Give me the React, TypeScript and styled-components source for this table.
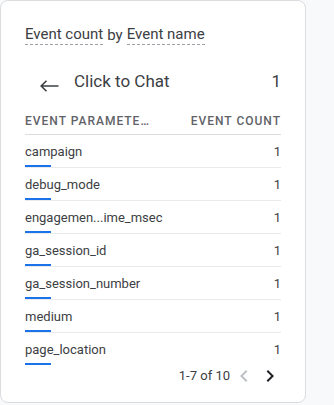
import { createGlobalStyle, styled } from 'styled-components';

const GlobalStyle = createGlobalStyle`
  html, body {
    margin: 0;
    padding: 0;
    background: #f8f9fa;
  }
  body {
    font-family: Roboto, 'Liberation Sans', Arial, sans-serif;
    color: #3c4043;
  }
`;

const rows = [
  { name: 'campaign', count: 1, share: 1 },
  { name: 'debug_mode', count: 1, share: 1 },
  { name: 'engagemen...ime_msec', count: 1, share: 1 },
  { name: 'ga_session_id', count: 1, share: 1 },
  { name: 'ga_session_number', count: 1, share: 1 },
  { name: 'medium', count: 1, share: 1 },
  { name: 'page_location', count: 1, share: 1 },
];

const Card = styled.div`
  box-sizing: border-box;
  width: 306px;
  height: 403px;
  background: #fff;
  border: 1px solid #dadce0;
  border-radius: 8px;
  padding: 24px 24px 0 24px;
  display: flex;
  flex-direction: column;
`;

const Title = styled.div`
  font-size: 15px;
  line-height: 20px;
  color: #3c4043;
  display: flex;
  gap: 4px;
`;

const Dim = styled.span`
  border-bottom: 1px dashed #9aa0a6;
  line-height: 18px;
`;

const DrillRow = styled.div`
  display: flex;
  align-items: center;
  margin-top: 24px;
  height: 24px;
  font-size: 17px;
  color: #3c4043;
`;

const BackButton = styled.button`
  border: none;
  background: none;
  padding: 0;
  margin: 0 15px 0 15px;
  display: flex;
  align-items: center;
  height: 24px;
  cursor: pointer;
  svg {
    margin-top: 9px;
  }
`;

const DrillName = styled.span`
  flex: 1;
`;

const HeaderRow = styled.div`
  display: flex;
  justify-content: space-between;
  margin-top: 20px;
  padding-bottom: 5px;
  border-bottom: 1px solid #dadce0;
  font-size: 12px;
  line-height: 16px;
  font-weight: 500;
  letter-spacing: 1px;
  color: #5f6368;
`;

const Row = styled.div<{ $last?: boolean }>`
  display: flex;
  flex-direction: column;
  padding-top: 7px;
  border-bottom: 1px solid ${(p) => (p.$last ? 'transparent' : '#e8eaed')};
`;

const RowLine = styled.div`
  display: flex;
  justify-content: space-between;
  font-size: 13px;
  line-height: 20px;
  color: #3c4043;
`;

const BarTrack = styled.div`
  width: 26px;
  height: 2px;
  margin-top: 3px;
`;

const Bar = styled.div`
  height: 100%;
  background: #1a73e8;
`;

const Pager = styled.div`
  display: flex;
  justify-content: flex-end;
  align-items: center;
  margin-top: -2px;
  margin-right: -1px;
  font-size: 13px;
  line-height: 20px;
  color: #3c4043;
  gap: 2px;
`;

const PageButton = styled.button<{ $disabled?: boolean }>`
  border: none;
  background: none;
  padding: 0;
  width: 24px;
  height: 24px;
  display: flex;
  align-items: center;
  justify-content: center;
  color: ${(p) => (p.$disabled ? '#bdc1c6' : '#202124')};
  svg {
    fill: currentColor;
  }
`;

const App = () => {
  return (
    <>
      <GlobalStyle />
      <Card>
        <Title>
          <Dim>Event count</Dim>
          <span>by</span>
          <Dim>Event name</Dim>
        </Title>
        <DrillRow>
          <BackButton aria-label="Back">
            <svg width="19" height="12" viewBox="0 0 19 12">
              <path d="M1 6H18.5M6.5 0.8L1.2 6L6.5 11.2" fill="none" stroke="#3c4043" strokeWidth="1.6" />
            </svg>
          </BackButton>
          <DrillName>Click to Chat</DrillName>
          <span>1</span>
        </DrillRow>
        <HeaderRow>
          <span>EVENT PARAMETE…</span>
          <span>EVENT COUNT</span>
        </HeaderRow>
        {rows.map((r, i) => (
          <Row key={r.name} $last={i === rows.length - 1}>
            <RowLine>
              <span>{r.name}</span>
              <span>{r.count}</span>
            </RowLine>
            <BarTrack>
              <Bar style={{ width: `${r.share * 100}%` }} />
            </BarTrack>
          </Row>
        ))}
        <Pager>
          <span>1-7 of 10</span>
          <PageButton $disabled aria-label="Previous">
            <svg width="24" height="24" viewBox="0 0 24 24">
              <path d="M15.41 7.41L14 6l-6 6 6 6 1.41-1.41L10.83 12z" />
            </svg>
          </PageButton>
          <PageButton aria-label="Next">
            <svg width="24" height="24" viewBox="0 0 24 24">
              <path d="M10 6L8.59 7.41 13.17 12l-4.58 4.59L10 18l6-6z" />
            </svg>
          </PageButton>
        </Pager>
      </Card>
    </>
  );
};

export default App;
